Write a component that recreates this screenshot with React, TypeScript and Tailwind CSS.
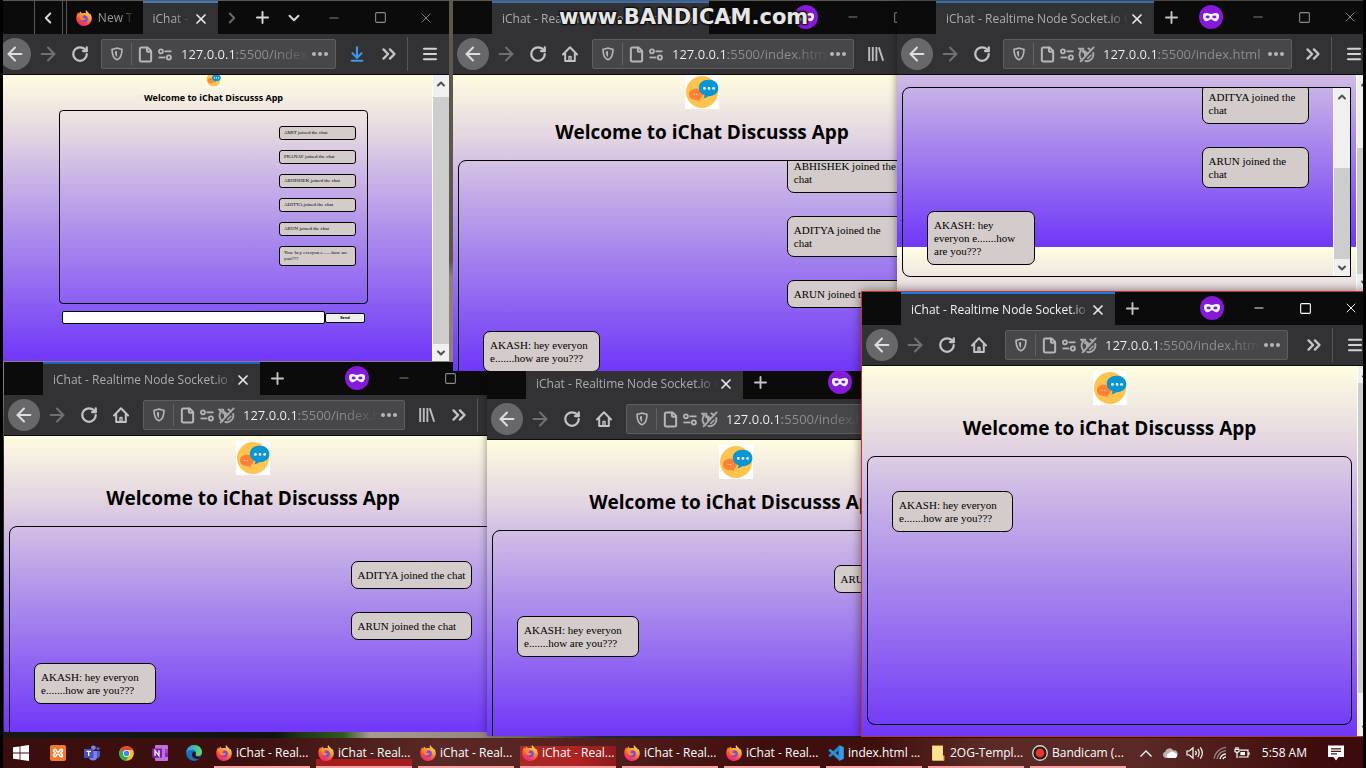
import React from "react";
import {
  ArrowDownToLine,
  ArrowLeft,
  ArrowRight,
  ChevronDown,
  ChevronLeft,
  ChevronRight,
  ChevronsRight,
  ChevronUp,
  File as FileIcon,
  Menu,
  Minus,
  Plus,
  RotateCw,
  Square,
  X,
} from "lucide-react";

/* ---------- icons ---------- */

function FirefoxIcon({ id }: { id: string }) {
  return (
    <svg viewBox="0 0 16 16" className="size-4 shrink-0" aria-hidden="true">
      <defs>
        <linearGradient id={id} x1="0.8" y1="0" x2="0.25" y2="1">
          <stop offset="0" stopColor="#ffe94a" />
          <stop offset="0.35" stopColor="#ffa42e" />
          <stop offset="0.7" stopColor="#ff4a45" />
          <stop offset="1" stopColor="#e6207f" />
        </linearGradient>
      </defs>
      <path
        d="M10.2 0.1C9.3 1.3 9.6 2.6 10.4 3.4C9 2.8 7.4 2.9 6.2 3.3C5.3 3.1 4.7 2.4 4.4 1.6C3.7 2.2 3.3 3 3.2 3.8C2.8 3.6 2.4 3 2.2 2.3C0.8 4.2 0.2 6.2 0.3 8.4C0.5 12.7 3.9 16 8 16C12.4 16 15.8 12.6 15.8 8.3C15.8 6.4 15 4.6 13.8 3.5C13.9 4 13.9 4.3 13.8 4.6C12.9 2.7 11 2 10.2 0.1Z"
        fill={`url(#${id})`}
      />
      <circle cx="8.3" cy="8.8" r="3.5" fill="#7a4be0" />
      <path d="M3.4 5.2C5 4.4 7 4.8 8.2 6.4C7 6.2 6.4 6.8 6.5 7.6C7.4 8.8 9 7.8 9.6 8.6C9 11 5 11.4 4 8.6C3.6 7.4 3.2 6.4 3.4 5.2Z" fill="#ff8a2c" />
    </svg>
  );
}

function ChatLogo({ className }: { className: string }) {
  return (
    <svg viewBox="0 0 34 34" className={className} role="img" aria-label="iChat logo">
      <rect width="34" height="34" fill="#fff" />
      <circle cx="17" cy="17" r="16" fill="#fdc44f" />
      <path d="M4 19.5C4 16 7 13.8 10.8 13.8C14.8 13.8 17.8 16 17.8 19.3C17.8 21.6 16.5 23.4 14.4 24.3L15.2 26.4L11.6 24.9C7.2 25.2 4 23 4 19.5Z" fill="#ff8036" />
      <path d="M13.8 12.8C13.8 8 18 4.8 23.6 4.8C29.3 4.8 33.4 8.2 33.4 13C33.4 18 28.8 21.6 23 21.2C22 22.2 20.2 23 18.4 23.2C19.2 22.2 19.6 21.2 19.5 20.2C16 18.9 13.8 16.3 13.8 12.8Z" fill="#0a96d2" />
      <circle cx="19.4" cy="13.4" r="1.4" fill="#fff" />
      <circle cx="24" cy="13.4" r="1.4" fill="#fff" />
      <circle cx="28.6" cy="13.4" r="1.4" fill="#fff" />
      <circle cx="9" cy="19.4" r="0.7" fill="#ffd9c4" />
      <circle cx="11.6" cy="19.4" r="0.7" fill="#ffd9c4" />
    </svg>
  );
}

function MaskIcon() {
  return (
    <svg viewBox="0 0 24 24" className="size-6 shrink-0" role="img" aria-label="Private browsing">
      <circle cx="12" cy="12" r="12" fill="#8719d8" />
      <path
        d="M4 10.4C4.2 8.6 5.6 7.9 7.6 8C9.4 8.1 10.4 8.9 12 8.9C13.6 8.9 14.6 8.1 16.4 8C18.4 7.9 19.8 8.6 20 10.4C20.2 13.6 18.6 16.2 16.2 16.2C14.2 16.2 13.6 14.3 12 14.3C10.4 14.3 9.8 16.2 7.8 16.2C5.4 16.2 3.8 13.6 4 10.4Z"
        fill="#fff"
      />
      <ellipse cx="8.6" cy="12" rx="2.1" ry="1.4" fill="#8719d8" />
      <ellipse cx="15.4" cy="12" rx="2.1" ry="1.4" fill="#8719d8" />
    </svg>
  );
}

function HomeIcon() {
  return (
    <svg viewBox="0 0 16 16" className="size-4" fill="none" stroke="#c3c3c4" strokeWidth="2" strokeLinejoin="round" strokeLinecap="round" aria-hidden="true">
      <path d="M1 8.5L8 1.3L15 8.5" />
      <path d="M3.2 7.5V15H12.8V7.5" />
      <path d="M7 15V10.5H9V15" strokeWidth="1.4" />
    </svg>
  );
}

function ShieldIcon() {
  return (
    <svg viewBox="0 0 14 16" className="h-[14px] w-3 shrink-0" fill="none" stroke="#b6b6b7" strokeWidth="1.9" strokeLinejoin="round" aria-hidden="true">
      <path d="M1.2 2.4C5 2 5.4 1.2 7 1.2C8.6 1.2 9 2 12.8 2.4C12.8 9 11.6 13 7 14.8C2.4 13 1.2 9 1.2 2.4Z" />
      <path d="M7 4.4V11.6C5 10.2 4.6 8 4.5 5Z" fill="#b6b6b7" stroke="none" />
    </svg>
  );
}

function PermissionsIcon() {
  return (
    <svg viewBox="0 0 16 14" className="h-[13px] w-4 shrink-0" fill="none" stroke="#b6b6b7" strokeWidth="1.9" aria-hidden="true">
      <circle cx="3.6" cy="3.6" r="2.2" />
      <path d="M7.5 3.6H15" />
      <circle cx="12.2" cy="10.2" r="2.2" />
      <path d="M1 10.2H8.5" />
    </svg>
  );
}

function AutoplayOffIcon() {
  return (
    <svg viewBox="0 0 17 17" className="size-[17px] shrink-0" fill="none" stroke="#a9a9aa" strokeWidth="1.9" strokeLinecap="round" aria-hidden="true">
      <path d="M4.4 14.2A6.6 6.6 0 0 1 3 4.6L1.2 2.6H5.2V6.4" />
      <path d="M15.2 7A6.6 6.6 0 0 1 7.4 15" />
      <path d="M15.6 1.4L2.6 15.4" />
      <path d="M6.6 4.8V10L9.8 7Z" fill="#a9a9aa" strokeWidth="1.2" />
      <path d="M10.4 2.4L13 4.2" />
      <path d="M9.8 12.4L13 9.2" strokeWidth="1.6" />
    </svg>
  );
}

function LibraryIcon() {
  return (
    <svg viewBox="0 0 16 14" className="h-[14px] w-4" fill="none" stroke="#bcbcbd" strokeWidth="1.9" aria-hidden="true">
      <path d="M1.2 0V14M4.8 0V14M8.4 0V14M10.8 0.4L15.2 13.8" />
    </svg>
  );
}

/* ---------- browser window ---------- */

const iconButton = "flex h-8 w-8 shrink-0 items-center justify-center text-[#c3c3c4]";

function Divider() {
  return <span className="h-[34px] w-px shrink-0 bg-[#57575a]" />;
}

function WindowControls({ active }: { active?: boolean }) {
  const tone = active ? "text-white" : "text-[#8a8a8a]";
  return (
    <div className={`flex h-8 shrink-0 ${tone}`}>
      <button type="button" aria-label="Minimize" className="flex w-[46px] items-center justify-center">
        <Minus className="h-4 w-[14px]" strokeWidth={1.6} />
      </button>
      <button type="button" aria-label="Maximize" className="flex w-[46px] items-center justify-center">
        <Square className="size-[13px]" strokeWidth={2} />
      </button>
      <button type="button" aria-label="Close window" className="flex w-[46px] items-center justify-center">
        <X className="size-4" strokeWidth={1.4} />
      </button>
    </div>
  );
}

function ActiveTab({ className, label, bright }: { className: string; label: string; bright?: boolean }) {
  return (
    <div className={`flex h-[33px] shrink-0 items-center border-t-2 bg-[#323234] pr-2 pl-[10px] ${className}`}>
      <span
        className={`min-w-0 flex-1 overflow-hidden [mask-image:linear-gradient(to_right,#000_calc(100%-18px),transparent_100%)] text-xs whitespace-nowrap ${bright ? "text-[#f2f2f3]" : "text-[#acacad]"}`}
      >
        {label}
      </span>
      <button type="button" aria-label="Close tab" className="flex size-[18px] shrink-0 items-center justify-center text-[#e8e8e8]">
        <X className="size-4" strokeWidth={2.6} />
      </button>
    </div>
  );
}

type UrlBarProps = { id: string; url: string; blocked?: boolean; whole?: boolean; className: string };

function UrlBar({ id, url, blocked, whole, className }: UrlBarProps) {
  const fade = whole ? "" : "[mask-image:linear-gradient(to_right,#000_calc(100%-36px),transparent_100%)]";
  return (
    <div className={`flex h-[30px] min-w-0 flex-1 items-center rounded-[2px] border border-[#5e5e61] bg-[#474749] pr-[6px] pl-[9px] ${className}`}>
      <ShieldIcon />
      <span className="ml-2 h-[22px] w-px bg-[#636366]" />
      <FileIcon className="ml-[5px] size-[17px] shrink-0 text-[#b6b6b7]" strokeWidth={2.8} />
      <span className="ml-[3px] flex shrink-0 items-center">
        <PermissionsIcon />
      </span>
      {blocked && (
        <span className="ml-[3px] flex shrink-0">
          <AutoplayOffIcon />
        </span>
      )}
      <label htmlFor={id} className="sr-only">
        Address
      </label>
      <input
        id={id}
        readOnly
        defaultValue={url}
        className={`ml-2 h-5 w-0 min-w-0 flex-1 bg-[linear-gradient(to_right,#f4f4f4_56px,#8f8f91_56px)] bg-clip-text text-[13px] text-transparent outline-none ${fade}`}
      />
      <button type="button" aria-label="Page actions" className="flex h-5 w-[18px] shrink-0 items-center justify-center gap-[2px]">
        <i className="size-1 rounded-full bg-[#b6b6b7]" />
        <i className="size-1 rounded-full bg-[#b6b6b7]" />
        <i className="size-1 rounded-full bg-[#b6b6b7]" />
      </button>
    </div>
  );
}

type ToolbarProps = {
  id: string;
  home?: boolean;
  blocked?: boolean;
  whole?: boolean;
  extra?: "library" | "download";
  urlClass: string;
};

function Toolbar({ id, home, blocked, whole, extra, urlClass }: ToolbarProps) {
  return (
    <div className="flex h-10 shrink-0 items-center bg-[#323234] pr-[3px] pl-1">
      <button type="button" aria-label="Back" className="mr-px flex size-8 shrink-0 items-center justify-center rounded-full bg-[#68686a] text-[#dededf]">
        <ArrowLeft className="size-[22px]" strokeWidth={2.2} />
      </button>
      <button type="button" aria-label="Forward" className="flex size-8 shrink-0 items-center justify-center text-[#707072]">
        <ArrowRight className="size-[22px]" strokeWidth={2.2} />
      </button>
      <button type="button" aria-label="Reload" className={iconButton}>
        <RotateCw className="size-[18px]" strokeWidth={3} />
      </button>
      {home && (
        <button type="button" aria-label="Home" className={iconButton}>
          <HomeIcon />
        </button>
      )}
      <UrlBar id={id} url="127.0.0.1:5500/index.html" blocked={blocked} whole={whole} className={urlClass} />
      {extra === "library" && (
        <button type="button" aria-label="Library" className={iconButton}>
          <LibraryIcon />
        </button>
      )}
      {extra === "download" && (
        <button type="button" aria-label="Downloads" className="flex size-8 shrink-0 items-center justify-center text-[#3c98f0]">
          <ArrowDownToLine className="size-[18px]" strokeWidth={2.8} />
        </button>
      )}
      <button type="button" aria-label="More tools" className={iconButton}>
        <ChevronsRight className="size-[22px]" strokeWidth={2.6} />
      </button>
      <span className="mx-[2px] flex">
        <Divider />
      </span>
      <button type="button" aria-label="Menu" className="ml-1 flex size-8 shrink-0 items-center justify-center text-[#d2d2d3]">
        <Menu className="size-[18px]" strokeWidth={2.8} />
      </button>
    </div>
  );
}

type WindowProps = ToolbarProps & {
  className: string;
  tabClass: string;
  active?: boolean;
  children: React.ReactNode;
};

function PrivateWindow({ className, tabClass, active, children, ...toolbar }: WindowProps) {
  return (
    <section className={`absolute flex flex-col overflow-hidden ${className}`}>
      <header className="flex h-[33px] shrink-0 bg-[#0b0b0b]">
        <ActiveTab label="iChat - Realtime Node Socket.io Chat App" bright={active} className={tabClass} />
        <button type="button" aria-label="New tab" className="flex h-8 w-[34px] items-center justify-center text-[#c3c3c4]">
          <Plus className="size-[19px]" strokeWidth={2.4} />
        </button>
        <span className="mt-1 mr-3 ml-auto flex">
          <MaskIcon />
        </span>
        <WindowControls active={active} />
      </header>
      <Toolbar {...toolbar} />
      <div className="flex min-h-0 flex-1 border-t border-[#0c0c0d]">{children}</div>
    </section>
  );
}

function ScrollBar({ thumbClass }: { thumbClass: string }) {
  return (
    <div className="flex w-[17px] shrink-0 flex-col items-center border-l border-white bg-[#f0f0f0] text-[#505050]">
      <span className="flex h-[17px] items-center">
        <ChevronUp className="size-3" strokeWidth={4} />
      </span>
      <span className="flex min-h-0 w-full flex-1 flex-col">
        <span className={`w-full bg-[#cdcdcd] ${thumbClass}`} />
      </span>
      <span className="flex h-[17px] items-center">
        <ChevronDown className="size-3" strokeWidth={4} />
      </span>
    </div>
  );
}

/* ---------- chat page ---------- */

type Message = { text: string; incoming?: boolean };

const pageGradient =
  "bg-[linear-gradient(to_bottom,#fffde1_0%,#e3d5e1_21%,#cdb8e6_34%,#a685ed_60%,#7037f8_100%)]";

function Messages({ items }: { items: Message[] }) {
  return (
    <>
      {items.map((m) => (
        <p
          key={m.text}
          className={`mx-6 mb-[23px] w-1/4 shrink-0 rounded-[7px] border border-black bg-[#d3cccb] px-[6px] pt-[7px] pb-[6px] font-['Liberation_Serif',serif] text-[11px] leading-[13px] whitespace-pre text-black last:mb-0 ${m.incoming ? "self-start" : "self-end"}`}
        >
          {m.text}
        </p>
      ))}
    </>
  );
}

type ChatPageProps = { items: Message[]; className: string; listClass: string; scrolling?: boolean };

function ChatPage({ items, className, listClass, scrolling }: ChatPageProps) {
  return (
    <main className={`flex min-w-0 flex-1 flex-col overflow-hidden px-[5px] ${pageGradient} ${className}`}>
      <ChatLogo className="size-[34px] shrink-0 self-center" />
      <h1 className="mt-[11px] mb-4 text-center text-[19px] leading-6 font-bold whitespace-nowrap text-black">Welcome to iChat Discusss App</h1>
      <div className="flex h-[269px] shrink-0 overflow-hidden rounded-lg border border-black">
        <div className={`flex min-w-0 flex-1 flex-col ${listClass}`}>
          <Messages items={items} />
        </div>
        {scrolling && <ScrollBar thumbClass="mt-auto h-1/2" />}
      </div>
    </main>
  );
}

function ZoomedOutPage() {
  const lines = [
    "AMIT joined the chat",
    "PRANAV joined the chat",
    "ABHISHEK joined the chat",
    "ADITYA joined the chat",
    "ARUN joined the chat",
    "You: hey everyon e.......how are\nyou???",
  ];
  return (
    <main className={`flex min-w-0 flex-1 flex-col items-center overflow-hidden ${pageGradient}`}>
      <ChatLogo className="-mt-[3px] size-[15px] shrink-0" />
      <h1 className="mt-[5px] mb-[6px] text-[9px] leading-3 font-bold text-black">Welcome to iChat Discusss App</h1>
      <div className="flex h-[194px] w-[309px] shrink-0 flex-col items-end gap-[10px] rounded border border-black pt-[15px] pr-[11px]">
        {lines.map((t) => (
          <p
            key={t}
            className="w-[77px] rounded-[3px] border border-black bg-[#d3cccb] px-1 py-[3px] font-['Liberation_Serif',serif] text-[5px] leading-[6px] whitespace-pre text-black"
          >
            {t}
          </p>
        ))}
      </div>
      <form className="mt-[7px] flex w-[303px] items-center" onSubmit={(e) => e.preventDefault()}>
        <label htmlFor="message" className="sr-only">
          Message
        </label>
        <input id="message" className="h-[13px] min-w-0 flex-1 rounded-[2px] border border-black bg-white text-[5px] outline-none" />
        <button type="submit" className="h-[10px] w-10 rounded-[2px] border border-black bg-[#efeff0] text-[4px] leading-none font-bold text-black">
          Send
        </button>
      </form>
    </main>
  );
}

function MainWindow() {
  return (
    <section className="absolute top-px -left-2 z-20 flex h-[360px] w-[454px] flex-col overflow-hidden">
      <header className="flex h-[33px] shrink-0 items-center bg-[#0b0b0b] pl-[39px]">
        <Divider />
        <button type="button" aria-label="Scroll tabs left" className="flex w-[27px] justify-center text-[#d8d8d8]">
          <ChevronLeft className="size-[18px]" strokeWidth={2.6} />
        </button>
        <span className="flex gap-[3px]">
          <Divider />
          <Divider />
        </span>
        <button type="button" className="flex w-[76px] items-center gap-[6px] pl-[9px] text-xs text-[#9b9b9c]">
          <FirefoxIcon id="fx-tab" />
          <span className="w-9 overflow-hidden [mask-image:linear-gradient(to_right,#000_65%,transparent)] text-left whitespace-nowrap">New Tab</span>
        </button>
        <ActiveTab label="iChat - Realtime" className="w-[75px] border-[#3a7bc8]" />
        <button type="button" aria-label="Scroll tabs right" className="flex w-[30px] justify-center text-[#6a6a6b]">
          <ChevronRight className="size-[18px]" strokeWidth={2.6} />
        </button>
        <button type="button" aria-label="New tab" className="flex w-[30px] justify-center text-[#d8d8d8]">
          <Plus className="size-[19px]" strokeWidth={2.4} />
        </button>
        <button type="button" aria-label="List all tabs" className="flex w-[34px] justify-center text-[#d8d8d8]">
          <ChevronDown className="size-[18px]" strokeWidth={2.6} />
        </button>
        <span className="ml-auto flex">
          <WindowControls />
        </span>
      </header>
      <Toolbar id="url-main" extra="download" urlClass="ml-[5px] mr-[5px]" />
      <div className="flex min-h-0 flex-1 border-t border-[#0c0c0d]">
        <ZoomedOutPage />
        <ScrollBar thumbClass="mt-[5px] flex-1" />
      </div>
    </section>
  );
}

/* ---------- taskbar ---------- */

function XamppIcon() {
  return (
    <svg viewBox="0 0 16 16" className="size-4" aria-hidden="true">
      <rect width="16" height="16" rx="2" fill="#f0792a" />
      <path d="M5 4.2C3.4 4 3 6 4.4 7C5.4 7.8 5.4 8.2 4.4 9C3 10 3.4 12 5 11.8C6.6 11.6 6.2 9 8 9C9.8 9 9.4 11.6 11 11.8C12.6 12 13 10 11.6 9C10.6 8.2 10.6 7.8 11.6 7C13 6 12.6 4 11 4.2C9.4 4.4 9.8 7 8 7C6.2 7 6.6 4.4 5 4.2Z" fill="none" stroke="#fff" strokeWidth="1.6" />
    </svg>
  );
}

function TeamsIcon() {
  return (
    <svg viewBox="0 0 16 16" className="size-4" aria-hidden="true">
      <circle cx="9.4" cy="2.8" r="2.4" fill="#7b83eb" />
      <circle cx="14" cy="3.6" r="1.7" fill="#5059c9" />
      <path d="M11 6H16V10.5A3 3 0 0 1 11 12.4Z" fill="#5059c9" />
      <path d="M5 6H13V11.4A4 4 0 0 1 5 11.8Z" fill="#7b83eb" />
      <rect y="4" width="9.4" height="9" rx="1" fill="#4551bd" />
      <path d="M2.4 6.3H7M4.7 6.3V11" stroke="#fff" strokeWidth="1.3" />
    </svg>
  );
}

function ChromeIcon() {
  return (
    <svg viewBox="0 0 16 16" className="size-[15px]" aria-hidden="true">
      <circle cx="8" cy="8" r="7.8" fill="#fbc116" />
      <path d="M8 8L1.3 4A7.8 7.8 0 0 1 14.8 4.2H8Z" fill="#ea4335" />
      <path d="M8 8L1.3 4A7.8 7.8 0 0 0 7.4 15.8L11 9.8Z" fill="#34a853" />
      <circle cx="8" cy="8" r="3.7" fill="#fff" />
      <circle cx="8" cy="8" r="2.9" fill="#4285f4" />
    </svg>
  );
}

function OneNoteIcon() {
  return (
    <svg viewBox="0 0 16 16" className="size-4" aria-hidden="true">
      <rect x="3" y="0" width="13" height="16" rx="1" fill="#c06fdb" />
      <path d="M13 4H16V8H13Z" fill="#9a45c0" />
      <path d="M13 8H16V12H13Z" fill="#7f2fae" />
      <rect y="3.4" width="10" height="9.4" rx="1" fill="#7a1fa8" />
      <path d="M3 11V5.4L7 10.8V5.2" stroke="#fff" strokeWidth="1.3" fill="none" />
    </svg>
  );
}

function EdgeIcon() {
  return (
    <svg viewBox="0 0 16 16" className="size-4" aria-hidden="true">
      <defs>
        <linearGradient id="edge-top" x1="0" y1="0.2" x2="1" y2="0.5">
          <stop offset="0" stopColor="#2a9fe0" />
          <stop offset="1" stopColor="#5fd86a" />
        </linearGradient>
      </defs>
      <circle cx="8" cy="8" r="7.9" fill="#1670c4" />
      <path d="M0.2 7.6C0.8 3 4.2 0.1 8.2 0.1C12.8 0.1 16 3.4 16 7C16 9.6 14 11 11.8 11C10 11 9.2 10.2 9.8 9.2C10.6 7.4 9.4 4.8 6.2 4.8C3.4 4.8 1.2 6 0.2 7.6Z" fill="url(#edge-top)" />
      <path d="M9.6 9.4C9.2 10.6 10.6 11.6 12.4 11.6C13.6 11.6 14.4 11.3 15.2 10.9C14.6 12.2 13.6 13.4 12.4 14.2C8.6 14.2 6 12.4 6 9.6C6 8 7 6.8 8.4 6.4C9.8 7 10 8.4 9.6 9.4Z" fill="#3a0e0d" />
    </svg>
  );
}

function VsCodeIcon() {
  return (
    <svg viewBox="0 0 16 16" className="size-4" aria-hidden="true">
      <path d="M11.6 0.2L15.8 2.2V13.8L11.6 15.8L10.6 15V1Z" fill="#2f9fe8" />
      <path d="M11.6 0.2L0.3 10.6L2 12.2L11.8 4.8Z" fill="#1f86cf" />
      <path d="M11.6 15.8L0.3 5.4L2 3.8L11.8 11.2Z" fill="#2a93dc" />
    </svg>
  );
}

function FolderIcon() {
  return (
    <svg viewBox="0 0 14 16" className="h-4 w-[14px]" aria-hidden="true">
      <path d="M1 0.5H12V15.5H1Z" fill="#f6cf6c" />
      <path d="M2 1H11.5V12L13 11V15.5H2Z" fill="#fde292" />
      <path d="M12 10.5H13.4V15.5H12Z" fill="#e8b94b" />
    </svg>
  );
}

function BandicamIcon() {
  return (
    <svg viewBox="0 0 16 16" className="size-4" aria-hidden="true">
      <circle cx="8" cy="8" r="7.9" fill="#d8d8d8" />
      <circle cx="8" cy="8" r="6.6" fill="#1c1c1c" />
      <circle cx="8" cy="8" r="4.4" fill="#ee3524" />
    </svg>
  );
}

const windowsOpen = [
  { label: "iChat - Real...", icon: <FirefoxIcon id="fx-1" />, tone: "" },
  { label: "iChat - Real...", icon: <FirefoxIcon id="fx-2" />, tone: "bg-[linear-gradient(to_bottom,transparent_65%,#a51e1e_65%)]" },
  { label: "iChat - Real...", icon: <FirefoxIcon id="fx-3" />, tone: "" },
  { label: "iChat - Real...", icon: <FirefoxIcon id="fx-4" />, tone: "bg-[linear-gradient(to_right,#a82a27,#b02222_60%,#8c1c1c)]" },
  { label: "iChat - Real...", icon: <FirefoxIcon id="fx-5" />, tone: "" },
  { label: "iChat - Real...", icon: <FirefoxIcon id="fx-6" />, tone: "" },
  { label: "index.html ...", icon: <VsCodeIcon />, tone: "" },
  { label: "2OG-Templ...", icon: <FolderIcon />, tone: "" },
  { label: "Bandicam (...", icon: <BandicamIcon />, tone: "" },
];

const pinned = [
  { name: "XAMPP", icon: <XamppIcon /> },
  { name: "Teams", icon: <TeamsIcon /> },
  { name: "Chrome", icon: <ChromeIcon /> },
  { name: "OneNote", icon: <OneNoteIcon /> },
  { name: "Edge", icon: <EdgeIcon /> },
];

function Taskbar() {
  return (
    <footer className="relative z-40 flex h-[30px] shrink-0 items-stretch bg-[linear-gradient(to_right,#3a0e0d_0%,#3c100f_18%,#5a2926_32%,#54211f_42%,#3f0f0e_56%,#3f0f0e_64%,#5c2a26_72%,#5a2925_84%,#3d0b0c_97%)] text-white">
      <button type="button" aria-label="Start" className="flex w-9 items-center justify-center">
        <svg viewBox="0 0 16 16" className="size-4" fill="#fff" aria-hidden="true">
          <path d="M0 2.3L6.6 1.4V7.6H0ZM7.4 1.3L16 0V7.6H7.4ZM0 8.4H6.6V14.6L0 13.7ZM7.4 8.4H16V16L7.4 14.7Z" />
        </svg>
      </button>
      <nav aria-label="Pinned" className="flex pl-[2px]">
        {pinned.map((p) => (
          <button key={p.name} type="button" aria-label={p.name} className="flex w-[34px] items-center justify-center">
            {p.icon}
          </button>
        ))}
      </nav>
      <nav aria-label="Open windows" className="flex gap-[6px] pl-[3px]">
        {windowsOpen.map((w, i) => (
          <button key={i} type="button" className="flex w-24 flex-col">
            <span className={`mt-2 flex h-5 w-full items-center pl-[2px] ${w.tone}`}>
              <span className="-mt-[6px] flex items-center gap-1">
                <span className="flex w-4 justify-center">{w.icon}</span>
                <span className="text-xs leading-4 whitespace-nowrap">{w.label}</span>
              </span>
            </span>
            <span className="h-[2px] w-full bg-[#f4a3a2]" />
          </button>
        ))}
      </nav>
      <div className="ml-auto flex items-center pr-[19px]">
        <svg viewBox="0 0 12 7" className="h-[7px] w-3" fill="none" stroke="#fff" strokeWidth="1.3" aria-hidden="true">
          <path d="M0.5 6.5L6 1L11.5 6.5" />
        </svg>
        <svg viewBox="0 0 16 12" className="ml-[10px] h-3 w-4" aria-hidden="true">
          <path d="M3.5 11A3.2 3.2 0 0 1 3.2 4.8A4.4 4.4 0 0 1 11.2 3.4A3.8 3.8 0 0 1 12.4 11Z" fill="#bdb3b2" />
          <path d="M6 11A2.6 2.6 0 0 1 7 6.2A3.6 3.6 0 0 1 13 6A2.6 2.6 0 0 1 13.4 11Z" fill="#fff" />
        </svg>
        <svg viewBox="0 0 18 14" className="ml-2 h-[14px] w-[18px]" fill="none" stroke="#fff" strokeWidth="1.2" aria-hidden="true">
          <path d="M1 5H3.4L7 1.8V12.2L3.4 9H1Z" />
          <path d="M9.4 4.8C10.4 6 10.4 8 9.4 9.2M11.8 3C13.6 5 13.6 9 11.8 11M14.2 1.4C17 4.6 17 9.4 14.2 12.6" />
        </svg>
        <svg viewBox="0 0 14 14" className="ml-[9px] size-[14px]" fill="none" strokeWidth="1.3" aria-hidden="true">
          <path d="M1 12.6C2 6.6 6.6 2 13 1.4M4 13C4.8 8.6 8.4 5.2 13 4.6" stroke="#a08a89" />
          <path d="M7 13C7.6 10.4 9.8 8.2 13 7.8M10 13.2C10.2 12 11.4 11 13 10.8" stroke="#fff" />
        </svg>
        <svg viewBox="0 0 16 12" className="ml-[7px] h-3 w-4" fill="none" stroke="#fff" strokeWidth="1.2" aria-hidden="true">
          <path d="M6 3.2H14V10H4.6" />
          <path d="M15 5.2V8" />
          <path d="M6.4 5H11V8.2H6.4Z" fill="#fff" stroke="none" />
          <path d="M1 2.4H5V4.6L3 5.6L1 4.6ZM2 0V2M4 0V2M3 5.6V11" />
        </svg>
        <time className="ml-3 text-xs">5:58 AM</time>
        <button type="button" aria-label="Notifications" className="ml-[21px] flex">
          <svg viewBox="0 0 16 16" className="size-4" aria-hidden="true">
            <path d="M0 0.5H16V12H10.5L8 15.5L5.5 12H0Z" fill="#fff" />
            <path d="M3 3.8H13M3 6.3H13M3 8.8H9" stroke="#4a1614" strokeWidth="1.2" />
          </svg>
        </button>
      </div>
    </footer>
  );
}

/* ---------- desktop ---------- */

const aditya = "ADITYA joined the chat";
const arun = "ARUN joined the chat";
const greeting: Message = { text: "AKASH: hey everyon\ne.......how are you???", incoming: true };

export default function App() {
  return (
    <div className="h-screen overflow-hidden bg-black px-[3px] font-['Open_Sans','Noto_Sans',sans-serif]">
      <div className="relative flex h-full flex-col overflow-hidden bg-[linear-gradient(to_bottom,#5d5a4d_0%,#5a564a_34%,#8e7f78_36%,#8e7f78_50%,#2a2b26_60%)]">
        <div className="relative min-h-0 flex-1">
          {/* wallpaper showing under the lower windows */}
          <div className="absolute inset-x-0 bottom-0 h-2 bg-[linear-gradient(to_right,#151a15_0%,#10140f_20%,#1d3a16_22%,#2f5a1c_25%,#a89c92_27%,#8d7f75_38%,#26303c_44%,#2a2220_60%)]" />

          <MainWindow />

          <PrivateWindow
            id="url-a"
            home
            extra="library"
            urlClass="mx-[6px]"
            tabClass="ml-[39px] w-[217px] border-[#2f6fbe]"
            className="top-px left-[450px] z-20 h-[370px] w-[515px]"
          >
            <ChatPage
              className=""
              scrolling
              listClass="justify-end pb-[56px]"
              items={[{ text: "ABHISHEK joined the\nchat" }, { text: "ADITYA joined the\nchat" }, { text: arun }, greeting]}
            />
            <ScrollBar thumbClass="mt-1 h-3/4" />
          </PrivateWindow>

          <PrivateWindow
            id="url-b"
            blocked
            whole
            urlClass="mx-[5px]"
            tabClass="ml-[39px] w-[218px] border-[#2f6fbe]"
            className="top-px left-[894px] z-20 h-[290px] w-[476px] shadow-[0_0_8px_rgba(0,0,0,0.45)]"
          >
            <main className={`min-w-0 flex-1 overflow-hidden bg-[length:100%_253px] bg-[position:0_-81px] px-[5px] pt-3 ${pageGradient}`}>
              <div className="flex h-[190px] overflow-hidden rounded-l-lg border border-black">
                <div className="flex min-w-0 flex-1 flex-col justify-end pb-[11px]">
                  <Messages
                    items={[
                      { text: "ADITYA joined the\nchat" },
                      { text: "ARUN joined the\nchat" },
                      { text: "AKASH: hey\neveryon e.......how\nare you???", incoming: true },
                    ]}
                  />
                </div>
                <ScrollBar thumbClass="mt-auto h-[91px]" />
              </div>
            </main>
            <ScrollBar thumbClass="mt-14 flex-1" />
          </PrivateWindow>

          <PrivateWindow
            id="url-c"
            home
            blocked
            extra="library"
            urlClass="mx-[6px]"
            tabClass="ml-[39px] w-[217px] border-[#1f66b8]"
            className="top-[362px] left-px z-[5] h-[370px] w-[515px]"
          >
            <ChatPage className="pt-[5px]" listClass="pt-[34px]" items={[{ text: aditya }, { text: arun }, greeting]} />
            <ScrollBar thumbClass="mt-1 h-3/4" />
          </PrivateWindow>

          <PrivateWindow
            id="url-d"
            home
            blocked
            extra="library"
            urlClass="mx-[6px]"
            tabClass="ml-[39px] w-[217px] border-[#1f66b8]"
            className="top-[366px] left-[484px] z-10 h-[370px] w-[515px] shadow-[0_0_8px_rgba(0,0,0,0.45)]"
          >
            <ChatPage className="pt-[5px]" listClass="pt-[34px]" items={[{ text: arun }, greeting]} />
            <ScrollBar thumbClass="mt-1 h-3/4" />
          </PrivateWindow>

          <PrivateWindow
            id="url-e"
            home
            blocked
            active
            urlClass="mx-[10px]"
            tabClass="ml-[39px] w-[214px] border-[#1a7be0]"
            className="top-[291px] left-[858px] z-30 h-[446px] w-[514px] border border-[#c8322e] shadow-[0_0_10px_rgba(0,0,0,0.5)]"
          >
            <ChatPage className="pt-[5px]" listClass="pt-[34px]" items={[greeting]} />
            <ScrollBar thumbClass="h-[310px]" />
          </PrivateWindow>

          {/* recorder watermark */}
          <div className="pointer-events-none absolute top-[5px] left-[556px] z-40 font-['DejaVu_Sans',sans-serif] text-[21px] leading-6 font-bold text-[#e6e6e6] [text-shadow:1px_1px_1px_#111,-1px_-1px_1px_#111,1px_-1px_1px_#111,-1px_1px_1px_#111,0_0_3px_#000]">
            www.BANDICAM.com
          </div>
        </div>
        <Taskbar />
      </div>
    </div>
  );
}
